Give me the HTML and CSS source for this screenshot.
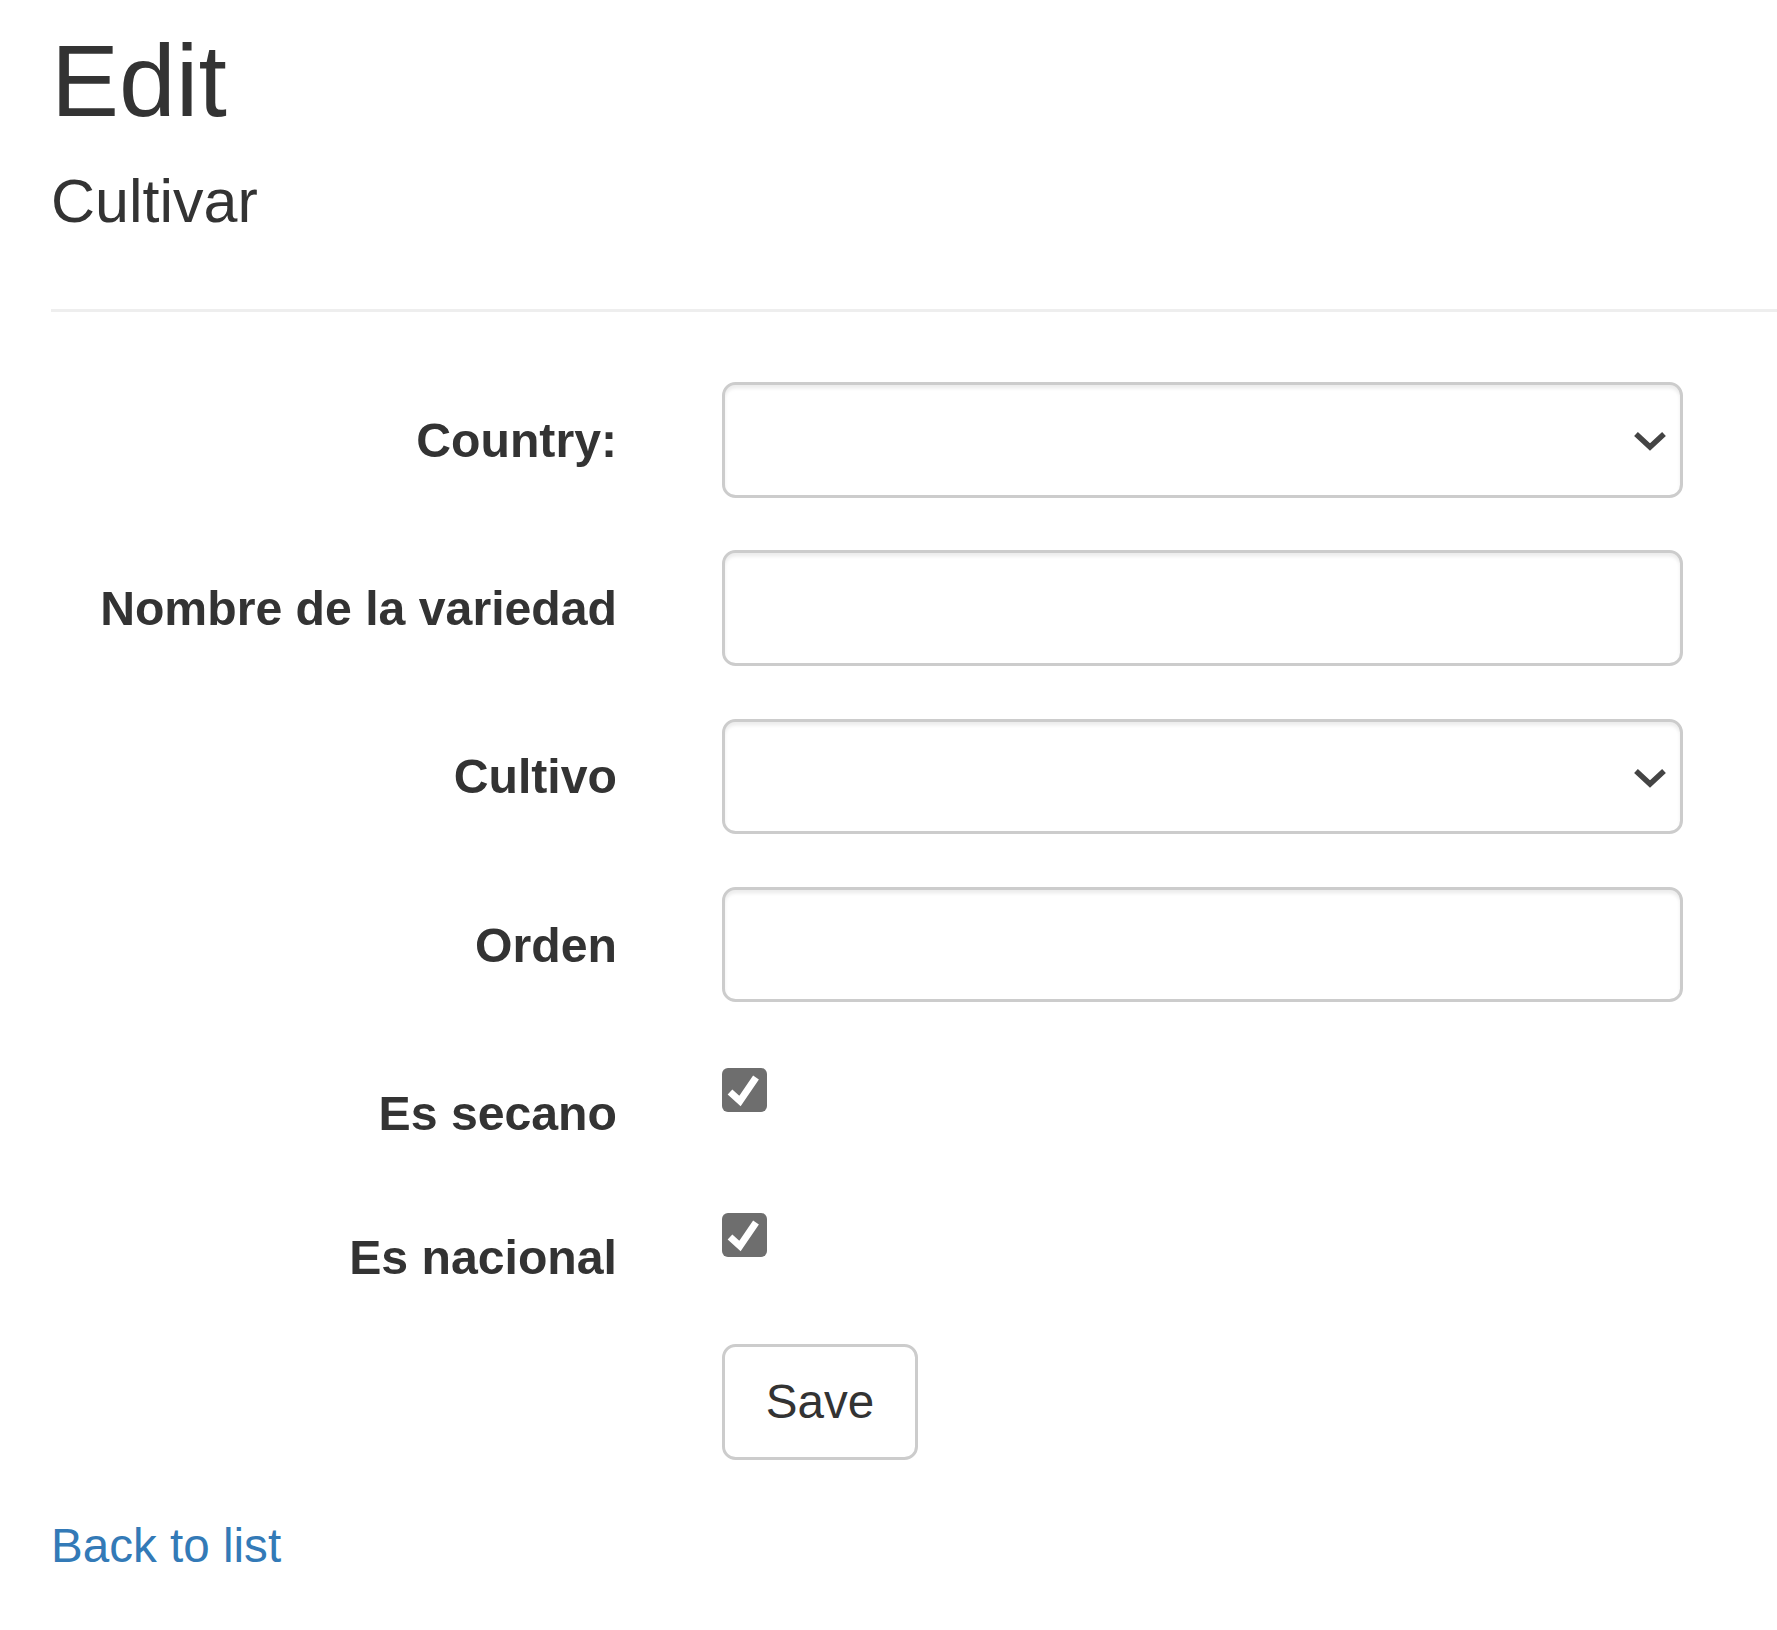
FILE: index.html
```html
<!DOCTYPE html>
<html lang="en">
<head>
<meta charset="utf-8">
<title>Edit - Cultivar</title>
<link rel="stylesheet" href="styles.css">
</head>
<body>
<div class="container">
  <h2 class="title">Edit</h2>
  <form class="form">
    <h4 class="subtitle">Cultivar</h4>
    <hr class="divider">

    <div class="form-group">
      <label class="control-label" for="country">Country:</label>
      <div class="control">
        <div class="select-wrap">
          <select id="country" class="form-control"><option></option></select>
          <svg class="chevron" width="38" height="26" viewBox="0 0 38 26"><path d="M5 7 L19 20 L33 7" fill="none" stroke="#444" stroke-width="5.5"/></svg>
        </div>
      </div>
    </div>

    <div class="form-group">
      <label class="control-label" for="nombre">Nombre de la variedad</label>
      <div class="control">
        <input id="nombre" class="form-control" type="text">
      </div>
    </div>

    <div class="form-group">
      <label class="control-label" for="cultivo">Cultivo</label>
      <div class="control">
        <div class="select-wrap">
          <select id="cultivo" class="form-control"><option></option></select>
          <svg class="chevron" width="38" height="26" viewBox="0 0 38 26"><path d="M5 7 L19 20 L33 7" fill="none" stroke="#444" stroke-width="5.5"/></svg>
        </div>
      </div>
    </div>

    <div class="form-group">
      <label class="control-label" for="orden">Orden</label>
      <div class="control">
        <input id="orden" class="form-control" type="text">
      </div>
    </div>

    <div class="form-group">
      <label class="control-label">Es secano</label>
      <div class="control">
        <span class="checkbox" role="checkbox" aria-checked="true">
          <svg width="45" height="44" viewBox="0 0 45 44"><path d="M8 24 L18 33 L34 9.5" fill="none" stroke="#fff" stroke-width="7"/></svg>
        </span>
      </div>
    </div>

    <div class="form-group">
      <label class="control-label">Es nacional</label>
      <div class="control">
        <span class="checkbox" role="checkbox" aria-checked="true">
          <svg width="45" height="44" viewBox="0 0 45 44"><path d="M8 24 L18 33 L34 9.5" fill="none" stroke="#fff" stroke-width="7"/></svg>
        </span>
      </div>
    </div>

    <div class="form-group">
      <div class="control offset">
        <button type="button" class="btn">Save</button>
      </div>
    </div>
  </form>

  <div class="back">
    <a href="#" class="link">Back to list</a>
  </div>
</div>
</body>
</html>
```

FILE: styles.css
```css
html, body {
  margin: 0;
  padding: 0;
  background: #fff;
}

body {
  font-family: "Liberation Sans", Arial, Helvetica, sans-serif;
  font-size: 47.6px;
  line-height: 68px;
  color: #333;
}

.container {
  padding: 0 51px;
}

.title {
  margin: 25px 0 0;
  font-size: 102px;
  line-height: 112px;
  font-weight: 400;
  color: #333;
}

.subtitle {
  margin: 31px 0 0;
  font-size: 61px;
  line-height: 67px;
  font-weight: 400;
  color: #333;
}

.divider {
  margin: 74px -51px 70px 0;
  border: 0;
  border-top: 3.4px solid #eee;
  height: 0;
}

.form-group {
  display: flex;
  align-items: flex-start;
  margin-bottom: 52.7px;
}

.control-label {
  width: 566px;
  flex: none;
  text-align: right;
  font-size: 48.2px;
  font-weight: 700;
  padding-top: 23.8px;
  line-height: 68px;
}

.control {
  margin-left: 105px;
  width: 961px;
  flex: none;
}

.offset {
  margin-left: 671px;
}

.form-control {
  display: block;
  box-sizing: border-box;
  width: 100%;
  height: 115.6px;
  margin: 0;
  padding: 20.4px 40.8px;
  font-family: inherit;
  font-size: 47.6px;
  color: #555;
  background: #fff;
  border: 3.4px solid #ccc;
  border-radius: 13.6px;
  box-shadow: inset 0 3.4px 3.4px rgba(0, 0, 0, 0.075);
  outline: none;
}

select.form-control {
  appearance: none;
  -webkit-appearance: none;
}

.select-wrap {
  position: relative;
}

.chevron {
  position: absolute;
  right: 14px;
  top: 45px;
  pointer-events: none;
}

.checkbox {
  display: block;
  width: 45px;
  height: 44px;
  margin-top: 13px;
  background: #6e6e6e;
  border-radius: 6px;
}

.checkbox svg {
  display: block;
}

.btn {
  display: inline-block;
  box-sizing: border-box;
  height: 115.6px;
  padding: 20.4px 40.8px;
  font-family: inherit;
  font-size: 47.6px;
  line-height: 68px;
  color: #333;
  background: #fff;
  border: 3.4px solid #ccc;
  border-radius: 13.6px;
  cursor: pointer;
}

.back {
  margin: 0;
}

.link {
  color: #337ab7;
  text-decoration: none;
}
```
